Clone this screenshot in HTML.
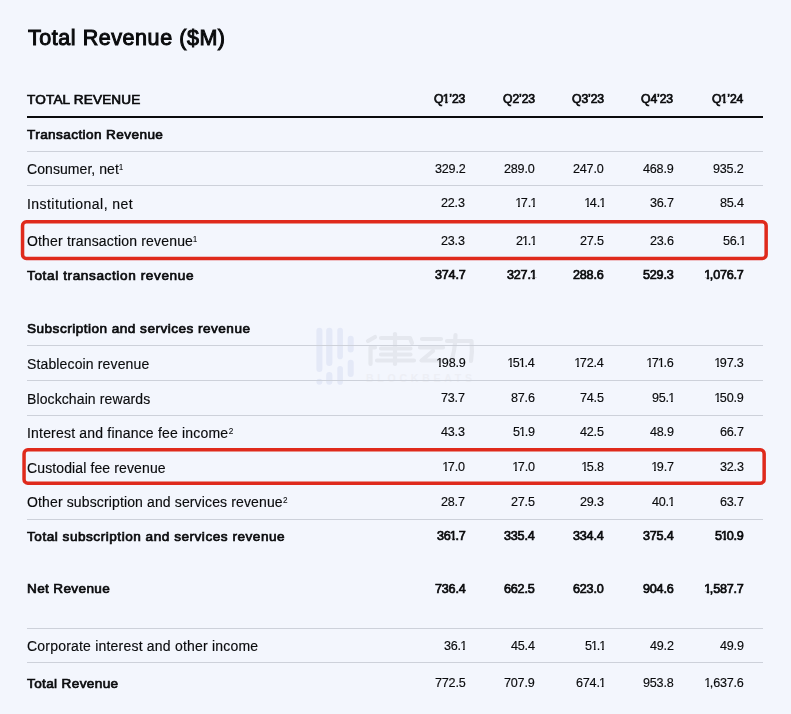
<!DOCTYPE html>
<html><head><meta charset="utf-8"><style>
html,body{margin:0;padding:0}
body{width:791px;height:714px;position:relative;overflow:hidden;background:#f3f6fd;font-family:"Liberation Sans",sans-serif;color:#0a0b0d}
.a{position:absolute;will-change:transform;white-space:nowrap;line-height:20px;height:20px}
.l{left:27px;font-size:14.0px;-webkit-text-stroke:0.15px #0a0b0d}
.lb{left:27px;font-size:13.6px;-webkit-text-stroke:0.7px #0a0b0d}
.n{-webkit-text-stroke:0.15px #0a0b0d;font-size:12.6px;letter-spacing:-0.2px;text-align:right}
.nb{font-size:12.6px;letter-spacing:-0.2px;-webkit-text-stroke:0.7px #0a0b0d;text-align:right}
sup{font-size:8.2px;letter-spacing:0;vertical-align:0;position:relative;top:-4.2px;margin-left:0.3px;-webkit-text-stroke:0.1px #0a0b0d}
sup .o{clip-path:polygon(-6px -6px, 14px -6px, 14px 11.85px, 3.09px 11.85px, 3.09px 24px, 1.76px 24px, 1.76px 11.85px, -6px 11.85px);margin-left:-0.5px;margin-right:0}
.hl{position:absolute;left:27px;width:736px;height:1px;background:#cdd1da}
svg{position:absolute;left:0;top:0}
.o{display:inline-block;margin-left:-0.8px;margin-right:-1.2px;clip-path:polygon(-6px -6px, 14px -6px, 14px 12.95px, 4.61px 12.95px, 4.61px 24px, 2.84px 24px, 2.84px 12.95px, -6px 12.95px)}
.nb .o{clip-path:polygon(-6px -6px, 14px -6px, 14px 12.67px, 4.88px 12.67px, 4.88px 24px, 2.57px 24px, 2.57px 12.67px, -6px 12.67px)}
.q .o{clip-path:polygon(-6px -6px, 14px -6px, 14px 12.57px, 4.75px 12.57px, 4.75px 24px, 2.47px 24px, 2.47px 12.57px, -6px 12.57px);margin-left:-0.6px;margin-right:-0.2px}
</style></head><body>

<svg width="791" height="714" viewBox="0 0 791 714">
<g fill="#e4e9f7">
<rect x="316.4" y="327.8" width="6" height="44.2" rx="3"/>
<rect x="316.4" y="378.8" width="6" height="6" rx="3"/>
<rect x="326.2" y="327.8" width="6.2" height="38.2" rx="3"/>
<rect x="326.2" y="372" width="6.2" height="12.7" rx="3"/>
<rect x="337.3" y="327.8" width="5.6" height="31.4" rx="2.8"/>
<rect x="337.3" y="366" width="5.6" height="18.7" rx="2.8"/>
<rect x="347.7" y="335.7" width="6" height="16.7" rx="3"/>
<rect x="347.7" y="359.7" width="6" height="17.2" rx="3"/>
</g>
<g fill="none" stroke="#e5e8ef" stroke-width="4.2" stroke-linecap="round" stroke-linejoin="round">
<path d="M375 337 L368 341 M375 347.5 L370.5 347.5 L370.5 364"/>
<path d="M381 338 L410 338 L412 343 M381 348.5 L410.5 348.5 M381 354.5 L410.5 354.5 M377 360.5 L414 360.5 M395 334 L395 364"/>
<path d="M422 339 L441 339 M420 347.5 L443 347.5 M433 351 L421.5 360.5 L442.5 360.5"/>
<path d="M447 341 L471.5 341 Q472.5 352 471 361 M455.5 335 Q455 352 451 361"/>
</g>
<text x="366" y="382" font-family="Liberation Sans" font-size="10.5" font-weight="bold" fill="#edeff5" textLength="106" lengthAdjust="spacing">BLOCKBEATS</text>
</svg>
<div class="a" id="title" style="left:27.5px;top:24.89px;line-height:26px;height:26px;font-size:21.5px;-webkit-text-stroke:1.0px #0a0b0d;letter-spacing:0.553px">Total Revenue ($M)</div>
<div class="a lb" style="top:90.11px;font-size:13.6px;letter-spacing:0.150px">TOTAL REVENUE</div>
<div class="a nb q" style="right:325.80px;top:88.87px;font-size:12.2px;letter-spacing:-0.1px">Q<span class="o">1</span>’23</div>
<div class="a nb q" style="right:256.20px;top:88.87px;font-size:12.2px;letter-spacing:-0.1px">Q2’23</div>
<div class="a nb q" style="right:187.20px;top:88.87px;font-size:12.2px;letter-spacing:-0.1px">Q3’23</div>
<div class="a nb q" style="right:117.70px;top:88.87px;font-size:12.2px;letter-spacing:-0.1px">Q4’23</div>
<div class="a nb q" style="right:47.50px;top:88.87px;font-size:12.2px;letter-spacing:-0.1px">Q<span class="o">1</span>’24</div>
<div style="position:absolute;left:27px;top:116px;width:736px;height:2px;background:#0a0b0d"></div>
<div class="hl" style="top:151px"></div>
<div class="hl" style="top:185px"></div>
<div class="hl" style="top:220px"></div>
<div class="hl" style="top:345px"></div>
<div class="hl" style="top:380px"></div>
<div class="hl" style="top:415px"></div>
<div class="hl" style="top:449px"></div>
<div class="hl" style="top:484px"></div>
<div class="hl" style="top:519px"></div>
<div class="hl" style="top:628px"></div>
<div class="hl" style="top:662px"></div>
<div class="a lb" style="top:125.31px;letter-spacing:0.400px">Transaction Revenue</div>
<div class="a l" style="top:158.97px;letter-spacing:0.067px">Consumer, net<sup><span class="o">1</span></sup></div>
<div class="a n" style="right:325.80px;top:159.04px;letter-spacing:-0.200px">329.2</div>
<div class="a n" style="right:256.20px;top:159.04px;letter-spacing:-0.200px">289.0</div>
<div class="a n" style="right:187.20px;top:159.04px;letter-spacing:-0.200px">247.0</div>
<div class="a n" style="right:117.70px;top:159.04px;letter-spacing:-0.200px">468.9</div>
<div class="a n" style="right:47.50px;top:159.04px;letter-spacing:-0.200px">935.2</div>
<div class="a l" style="top:193.67px;letter-spacing:0.447px">Institutional, net</div>
<div class="a n" style="right:325.80px;top:192.84px;letter-spacing:-0.200px">22.3</div>
<div class="a n" style="right:255.40px;top:192.84px;letter-spacing:-0.200px"><span class="o">1</span>7.<span class="o">1</span></div>
<div class="a n" style="right:186.40px;top:192.84px;letter-spacing:-0.200px"><span class="o">1</span>4.<span class="o">1</span></div>
<div class="a n" style="right:117.70px;top:192.84px;letter-spacing:-0.200px">36.7</div>
<div class="a n" style="right:47.50px;top:192.84px;letter-spacing:-0.200px">85.4</div>
<div class="a l" style="top:230.97px;letter-spacing:0.167px">Other transaction revenue<sup><span class="o">1</span></sup></div>
<div class="a n" style="right:325.80px;top:231.04px;letter-spacing:-0.200px">23.3</div>
<div class="a n" style="right:255.40px;top:231.04px;letter-spacing:-0.200px">2<span class="o">1</span>.<span class="o">1</span></div>
<div class="a n" style="right:187.20px;top:231.04px;letter-spacing:-0.200px">27.5</div>
<div class="a n" style="right:117.70px;top:231.04px;letter-spacing:-0.200px">23.6</div>
<div class="a n" style="right:46.70px;top:231.04px;letter-spacing:-0.200px">56.<span class="o">1</span></div>
<div class="a lb" style="top:265.71px;letter-spacing:0.608px">Total transaction revenue</div>
<div class="a nb" style="right:325.80px;top:265.14px;letter-spacing:-0.200px">374.7</div>
<div class="a nb" style="right:255.40px;top:265.14px;letter-spacing:-0.200px">327.<span class="o">1</span></div>
<div class="a nb" style="right:187.20px;top:265.14px;letter-spacing:-0.200px">288.6</div>
<div class="a nb" style="right:117.70px;top:265.14px;letter-spacing:-0.200px">529.3</div>
<div class="a nb" style="right:47.50px;top:265.14px;letter-spacing:-0.200px"><span class="o">1</span>,076.7</div>
<div class="a lb" style="top:319.01px;letter-spacing:0.475px">Subscription and services revenue</div>
<div class="a l" style="top:353.77px;letter-spacing:0.141px">Stablecoin revenue</div>
<div class="a n" style="right:325.80px;top:353.04px;letter-spacing:-0.200px"><span class="o">1</span>98.9</div>
<div class="a n" style="right:256.20px;top:353.04px;letter-spacing:-0.200px"><span class="o">1</span>5<span class="o">1</span>.4</div>
<div class="a n" style="right:187.20px;top:353.04px;letter-spacing:-0.200px"><span class="o">1</span>72.4</div>
<div class="a n" style="right:117.70px;top:353.04px;letter-spacing:-0.200px"><span class="o">1</span>7<span class="o">1</span>.6</div>
<div class="a n" style="right:47.50px;top:353.04px;letter-spacing:-0.200px"><span class="o">1</span>97.3</div>
<div class="a l" style="top:388.57px;letter-spacing:0.106px">Blockchain rewards</div>
<div class="a n" style="right:325.80px;top:388.34px;letter-spacing:-0.200px">73.7</div>
<div class="a n" style="right:256.20px;top:388.34px;letter-spacing:-0.200px">87.6</div>
<div class="a n" style="right:187.20px;top:388.34px;letter-spacing:-0.200px">74.5</div>
<div class="a n" style="right:116.90px;top:388.34px;letter-spacing:-0.200px">95.<span class="o">1</span></div>
<div class="a n" style="right:47.50px;top:388.34px;letter-spacing:-0.200px"><span class="o">1</span>50.9</div>
<div class="a l" style="top:422.57px;letter-spacing:0.193px">Interest and finance fee income<sup>2</sup></div>
<div class="a n" style="right:325.80px;top:422.44px;letter-spacing:-0.200px">43.3</div>
<div class="a n" style="right:256.20px;top:422.44px;letter-spacing:-0.200px">5<span class="o">1</span>.9</div>
<div class="a n" style="right:187.20px;top:422.44px;letter-spacing:-0.200px">42.5</div>
<div class="a n" style="right:117.70px;top:422.44px;letter-spacing:-0.200px">48.9</div>
<div class="a n" style="right:47.50px;top:422.44px;letter-spacing:-0.200px">66.7</div>
<div class="a l" style="top:457.77px;letter-spacing:0.120px">Custodial fee revenue</div>
<div class="a n" style="right:325.80px;top:457.04px;letter-spacing:-0.200px"><span class="o">1</span>7.0</div>
<div class="a n" style="right:256.20px;top:457.04px;letter-spacing:-0.200px"><span class="o">1</span>7.0</div>
<div class="a n" style="right:187.20px;top:457.04px;letter-spacing:-0.200px"><span class="o">1</span>5.8</div>
<div class="a n" style="right:117.70px;top:457.04px;letter-spacing:-0.200px"><span class="o">1</span>9.7</div>
<div class="a n" style="right:47.50px;top:457.04px;letter-spacing:-0.200px">32.3</div>
<div class="a l" style="top:492.07px;letter-spacing:0.132px">Other subscription and services revenue<sup>2</sup></div>
<div class="a n" style="right:325.80px;top:492.04px;letter-spacing:-0.200px">28.7</div>
<div class="a n" style="right:256.20px;top:492.04px;letter-spacing:-0.200px">27.5</div>
<div class="a n" style="right:187.20px;top:492.04px;letter-spacing:-0.200px">29.3</div>
<div class="a n" style="right:116.90px;top:492.04px;letter-spacing:-0.200px">40.<span class="o">1</span></div>
<div class="a n" style="right:47.50px;top:492.04px;letter-spacing:-0.200px">63.7</div>
<div class="a lb" style="top:527.31px;letter-spacing:0.516px">Total subscription and services revenue</div>
<div class="a nb" style="right:325.80px;top:526.24px;letter-spacing:-0.200px">36<span class="o">1</span>.7</div>
<div class="a nb" style="right:256.20px;top:526.24px;letter-spacing:-0.200px">335.4</div>
<div class="a nb" style="right:187.20px;top:526.24px;letter-spacing:-0.200px">334.4</div>
<div class="a nb" style="right:117.70px;top:526.24px;letter-spacing:-0.200px">375.4</div>
<div class="a nb" style="right:47.50px;top:526.24px;letter-spacing:-0.200px">5<span class="o">1</span>0.9</div>
<div class="a lb" style="top:579.31px;letter-spacing:0.340px">Net Revenue</div>
<div class="a nb" style="right:325.80px;top:578.94px;letter-spacing:-0.200px">736.4</div>
<div class="a nb" style="right:256.20px;top:578.94px;letter-spacing:-0.200px">662.5</div>
<div class="a nb" style="right:187.20px;top:578.94px;letter-spacing:-0.200px">623.0</div>
<div class="a nb" style="right:117.70px;top:578.94px;letter-spacing:-0.200px">904.6</div>
<div class="a nb" style="right:47.50px;top:578.94px;letter-spacing:-0.200px"><span class="o">1</span>,587.7</div>
<div class="a l" style="top:636.07px;letter-spacing:0.206px">Corporate interest and other income</div>
<div class="a n" style="right:325.00px;top:636.34px;letter-spacing:-0.200px">36.<span class="o">1</span></div>
<div class="a n" style="right:256.20px;top:636.34px;letter-spacing:-0.200px">45.4</div>
<div class="a n" style="right:186.40px;top:636.34px;letter-spacing:-0.200px">5<span class="o">1</span>.<span class="o">1</span></div>
<div class="a n" style="right:117.70px;top:636.34px;letter-spacing:-0.200px">49.2</div>
<div class="a n" style="right:47.50px;top:636.34px;letter-spacing:-0.200px">49.9</div>
<div class="a lb" style="top:673.51px;letter-spacing:0.350px">Total Revenue</div>
<div class="a n" style="right:325.80px;top:673.24px;letter-spacing:-0.200px">772.5</div>
<div class="a n" style="right:256.20px;top:673.24px;letter-spacing:-0.200px">707.9</div>
<div class="a n" style="right:186.40px;top:673.24px;letter-spacing:-0.200px">674.<span class="o">1</span></div>
<div class="a n" style="right:117.70px;top:673.24px;letter-spacing:-0.200px">953.8</div>
<div class="a n" style="right:47.50px;top:673.24px;letter-spacing:-0.200px"><span class="o">1</span>,637.6</div>
<svg width="791" height="714" viewBox="0 0 791 714"><defs><filter id="bl" x="-1%" y="-10%" width="102%" height="120%"><feGaussianBlur stdDeviation="0.45"/></filter></defs><g fill="none" stroke="#df2a1c" stroke-width="3.5" filter="url(#bl)"><rect x="22.55" y="221.85" width="743.6" height="36.599999999999994" rx="3.8" ry="3.8"/><rect x="24.05" y="449.85" width="740.1" height="33.39999999999998" rx="3.8" ry="3.8"/></g></svg>
</body></html>
